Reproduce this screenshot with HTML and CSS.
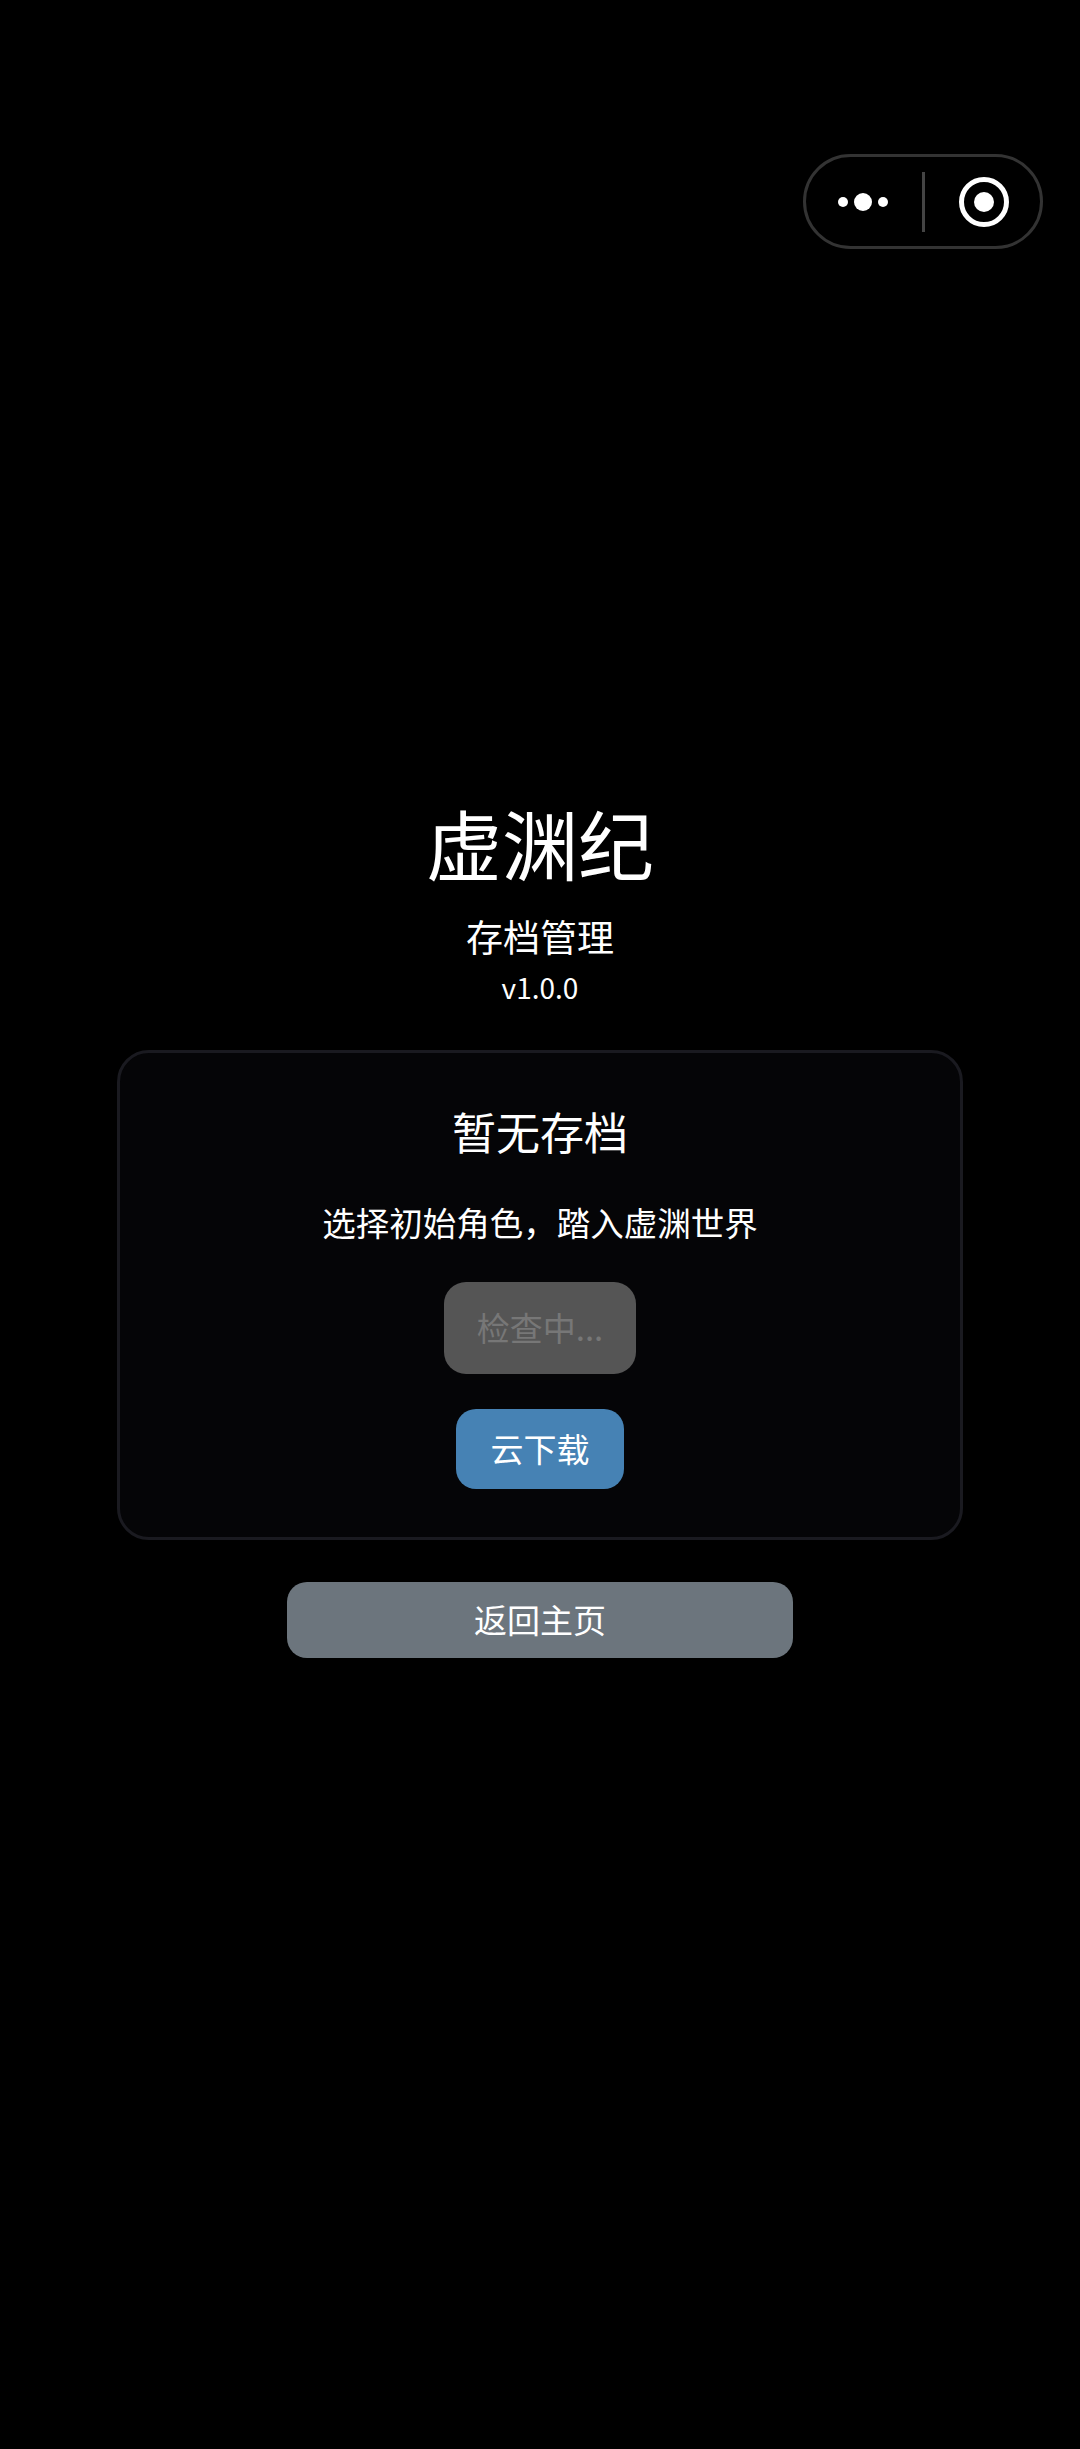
FILE: index.html
```html
<!DOCTYPE html>
<html lang="zh-CN">
<head>
    <meta charset="UTF-8">
    <meta name="viewport" content="width=device-width, initial-scale=1.0">
    <title>虚渊纪 - 存档管理</title>
    <link rel="stylesheet" href="styles.css">
</head>
<body>
    <div class="capsule">
        <svg class="capsule-icon" width="60" height="20" viewBox="0 0 60 20">
            <circle cx="10" cy="10" r="5" fill="#fff"/>
            <circle cx="30" cy="10" r="9" fill="#fff"/>
            <circle cx="50" cy="10" r="5" fill="#fff"/>
        </svg>
        <span class="capsule-divider"></span>
        <svg class="capsule-icon" width="52" height="52" viewBox="0 0 52 52">
            <circle cx="26" cy="26" r="22.5" fill="none" stroke="#fff" stroke-width="5"/>
            <circle cx="26" cy="26" r="10" fill="#fff"/>
        </svg>
    </div>

    <main class="page">
        <h1 class="title">虚渊纪</h1>
        <div class="subtitle">存档管理</div>
        <div class="version">v1.0.0</div>

        <section class="card">
            <h2 class="card-title">暂无存档</h2>
            <p class="card-text">选择初始角色，踏入虚渊世界</p>
            <button class="btn btn-checking">检查中...</button>
            <button class="btn btn-cloud">云下载</button>
        </section>

        <button class="btn btn-back">返回主页</button>
    </main>
</body>
</html>
```

FILE: styles.css
```css
* {
    box-sizing: border-box;
    margin: 0;
    padding: 0;
}

body {
    background: #000;
    color: #fff;
    font-family: "Noto Sans CJK SC", "Noto Sans", sans-serif;
    height: 2449px;
    overflow: hidden;
}

.capsule {
    position: absolute;
    top: 154px;
    left: 803px;
    width: 240px;
    height: 95px;
    border: 3px solid #333;
    border-radius: 48px;
    display: flex;
    align-items: center;
    padding-left: 27px;
}
.capsule-divider {
    width: 3px;
    height: 60px;
    background: #444;
    margin: 0 33px 0 29px;
}

.page {
    display: flex;
    flex-direction: column;
    align-items: center;
    padding-top: 786px;
}
.title {
    font-size: 76px;
    font-weight: 400;
    line-height: 112px;
}
.subtitle {
    font-size: 37px;
    line-height: 54px;
    margin-top: 11px;
}
.version {
    font-size: 28px;
    line-height: 40px;
    margin-top: 4px;
}

.card {
    width: 846px;
    height: 490px;
    margin-top: 43px;
    background: #050507;
    border: 3px solid #1a1a20;
    border-radius: 32px;
    display: flex;
    flex-direction: column;
    align-items: center;
    padding-top: 46px;
}
.card-title {
    font-size: 44px;
    font-weight: 400;
    line-height: 64px;
}
.card-text {
    font-size: 33.5px;
    line-height: 50px;
    margin-top: 34px;
}

.btn {
    border: none;
    color: #fff;
    font-family: inherit;
    font-size: 33px;
    padding-bottom: 3px;
    display: block;
}
.btn-checking {
    width: 192px;
    height: 92px;
    margin-top: 35px;
    background: #555;
    color: #777;
    border-radius: 22px;
}
.btn-cloud {
    width: 168px;
    height: 80px;
    margin-top: 35px;
    background: #4682b4;
    border-radius: 20px;
}
.btn-back {
    width: 506px;
    height: 76px;
    margin-top: 42px;
    background: #6c757d;
    border-radius: 20px;
}
```
